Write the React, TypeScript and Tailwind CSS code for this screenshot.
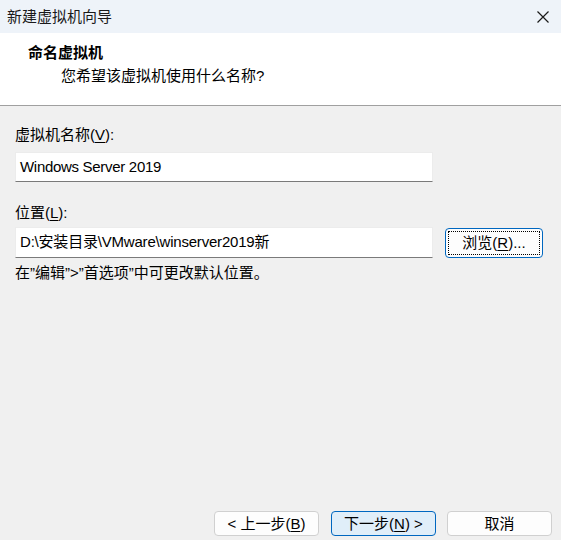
import React from "react";

const font = "font-['Segoe_UI','Liberation_Sans','Noto_Sans_CJK_SC',sans-serif]";

function WinButton({
  children,
  primary,
  className = "",
}: {
  children: React.ReactNode;
  primary?: boolean;
  className?: string;
}) {
  return (
    <button
      type="button"
      className={`flex h-[25px] w-[105px] items-center justify-center rounded-[4px] border text-[15px] leading-[20px] text-black ${
        primary ? "border-[#0067c0] bg-[#e0eef9]" : "border-[#d0d0d0] bg-[#fdfdfd]"
      } ${className}`}
    >
      {children}
    </button>
  );
}

export default function App() {
  return (
    <div className={`flex h-[540px] w-[561px] flex-col overflow-hidden bg-[#f0f0f0] ${font} text-black`}>
      {/* title bar */}
      <div className="flex h-[33px] shrink-0 items-center justify-between bg-[#eef3f9] pl-[7px] pr-[10px]">
        <span className="text-[15px] leading-[20px] text-[#1a1a1a]">新建虚拟机向导</span>
        <svg width="14" height="14" viewBox="0 0 14 14" className="mr-[1px]">
          <path d="M1.5 1.5 L12.5 12.5 M12.5 1.5 L1.5 12.5" stroke="#1a1a1a" strokeWidth="1.2" fill="none" />
        </svg>
      </div>

      {/* header */}
      <div className="flex h-[73px] shrink-0 flex-col border-b border-[#a0a0a0] bg-white pl-[28px] pt-[10px]">
        <span className="text-[15px] font-bold leading-[20px]">命名虚拟机</span>
        <span className="ml-[33px] mt-[3px] text-[15px] leading-[20px]">您希望该虚拟机使用什么名称?</span>
      </div>

      {/* body */}
      <div className="flex flex-1 flex-col pl-[15px]">
        <label className="mt-[19px] text-[15px] leading-[20px]">
          虚拟机名称(<span className="underline underline-offset-2">V</span>):
        </label>
        <div className="mt-[7px] flex h-[30px] w-[418px] items-center border border-[#ececec] border-b-[#7a7a7a] bg-white pl-[4px] text-[15px] tracking-[-0.3px]">
          Windows Server 2019
        </div>

        <label className="mt-[21px] text-[15px] leading-[20px]">
          位置(<span className="underline underline-offset-2">L</span>):
        </label>
        <div className="mt-[4px] flex items-center gap-[12px]">
          <div className="flex h-[31px] w-[418px] items-center border border-[#ececec] border-b-[#7a7a7a] bg-white pl-[4px] text-[15px] tracking-[-0.2px]">
            D:\安装目录\VMware\winserver2019新
          </div>
          <button
            type="button"
            className="flex h-[30px] w-[98px] items-center justify-center rounded-[4px] border border-[#0067c0] bg-[#fdfdfd] p-[2px]"
          >
            <span className="flex h-full w-full items-center justify-center border border-dotted border-black text-[15px] leading-[20px]">
              浏览(<span className="underline underline-offset-2">R</span>)...
            </span>
          </button>
        </div>
        <p className="mt-[5px] text-[15px] leading-[20px]">在”编辑”&gt;”首选项”中可更改默认位置。</p>

        <div className="mb-[4px] mr-[9px] mt-auto flex justify-end">
          <WinButton>
            &lt; 上一步(<span className="underline underline-offset-2">B</span>)
          </WinButton>
          <WinButton primary className="ml-[12px] w-[104px]">
            下一步(<span className="underline underline-offset-2">N</span>) &gt;
          </WinButton>
          <WinButton className="ml-[11px]">取消</WinButton>
        </div>
      </div>
    </div>
  );
}
